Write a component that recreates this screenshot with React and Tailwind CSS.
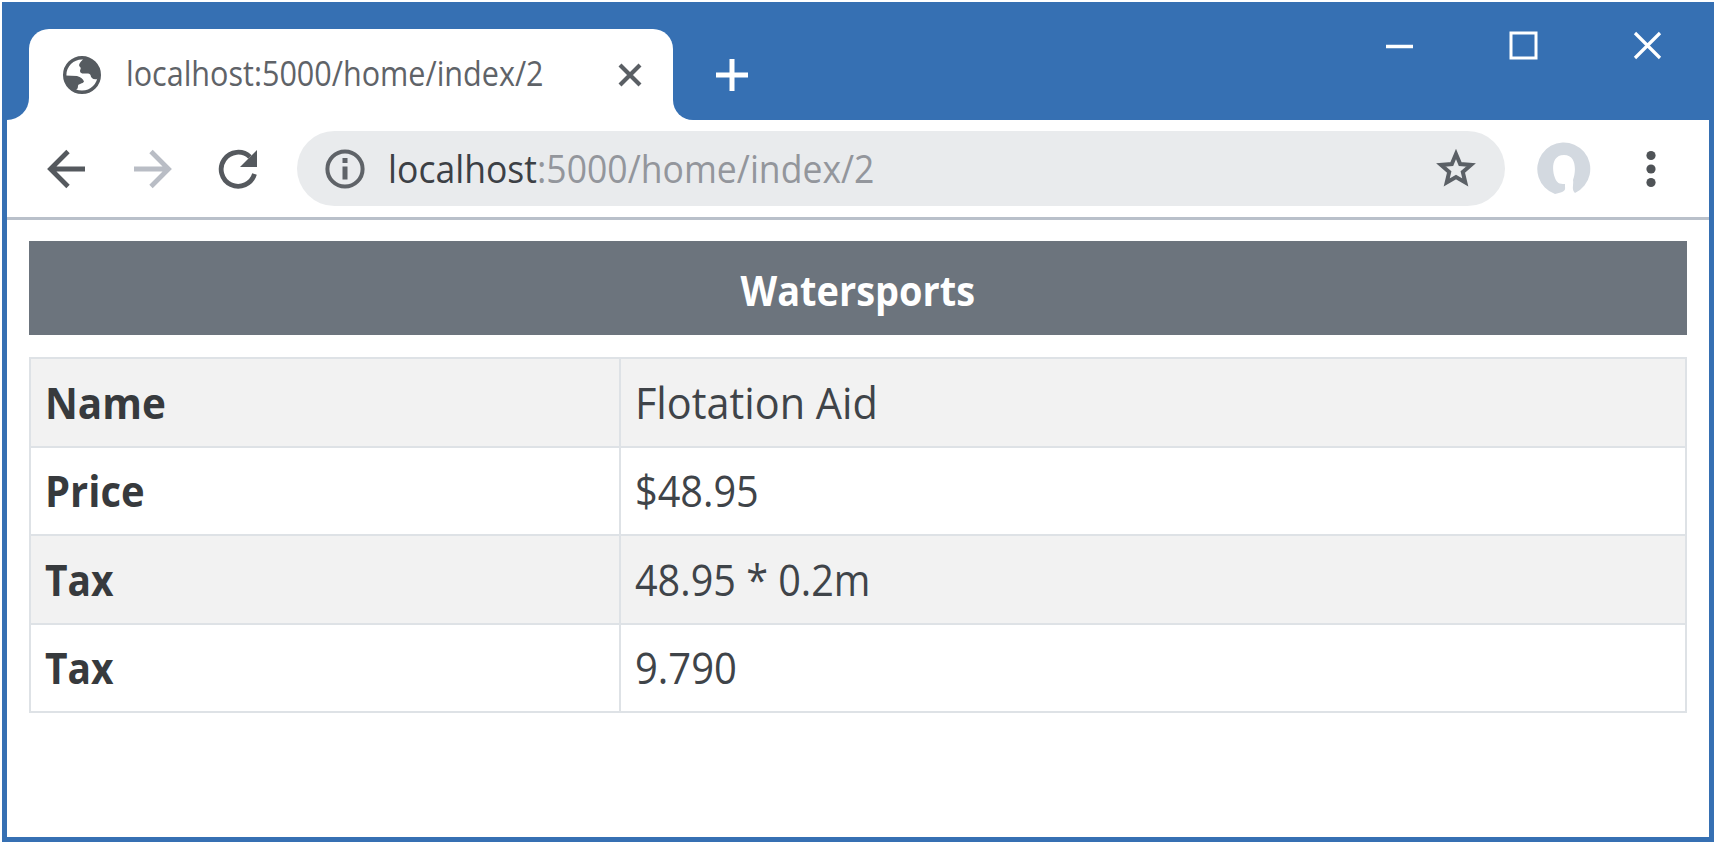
const rows = [
  { label: "Name", value: "Flotation Aid", labelFit: "scale-x-[0.94]", valueFit: "scale-x-[0.963]" },
  { label: "Price", value: "$48.95", labelFit: "scale-x-[0.93]", valueFit: "scale-x-[0.922]" },
  { label: "Tax", value: "48.95 * 0.2m", labelFit: "scale-x-[0.905]", valueFit: "scale-x-[0.92]" },
  { label: "Tax", value: "9.790", labelFit: "scale-x-[0.905]", valueFit: "scale-x-[0.93]" },
];

function Globe() {
  return (
    <svg className="h-10 w-10 shrink-0" viewBox="0 0 40 40" fill="none">
      <circle cx="20" cy="20" r="17.3" stroke="#565b60" strokeWidth="3.4" />
      <path d="M22 3 C19 7 15.500 9 18 12 C20 13.500 17 15 18.500 17.500 C21 20 27 17 28.500 20 C29 23 31 25 35.500 24 L38 18 C36 9 30 3 22 3 Z" fill="#565b60" />
      <path d="M3 20.500 L15 21 C19 22 21 24 22 26.500 C21 29 16 28.500 16 31 C16 34 14.500 35 12 35.500 C6 32 3 27 3 20.500 Z" fill="#565b60" />
    </svg>
  );
}

function TitleBar() {
  return (
    <header className="flex h-[113px] shrink-0 bg-[#3670b3]">
      <div className="flex w-[22px] items-end bg-white">
        <div className="h-full w-full rounded-br-[22px] bg-[#3670b3]" />
      </div>
      <div className="flex w-[644px] items-end">
        <div className="flex h-[91px] w-full items-center rounded-t-[20px] bg-white pl-[33px]">
          <Globe />
          <div className="ml-6 w-[452px] whitespace-nowrap pb-[3px] text-[34px] leading-none text-[#5f6368]">
            <span className="inline-block origin-left scale-x-[0.898]">localhost:5000/home/index/2</span>
          </div>
          <svg className="ml-10 h-6 w-6 shrink-0" viewBox="0 0 24 24" stroke="#5a5f64" strokeWidth="4.200">
            <path d="M2 2 L22 22 M22 2 L2 22" />
          </svg>
        </div>
      </div>
      <div className="w-6 bg-white">
        <div className="h-full w-full rounded-bl-[20px] bg-[#3670b3]" />
      </div>
      <svg className="ml-[18px] mt-[51px] h-[34px] w-[34px]" viewBox="0 0 34 34" stroke="white" strokeWidth="5">
        <path d="M17 1 V33 M1 17 H33" />
      </svg>
      <div className="ml-auto mr-[47px] mt-[24px] flex gap-[95px]">
        <svg className="h-[29px] w-[29px]" viewBox="0 0 29 29" stroke="white" strokeWidth="3.500"><path d="M1 15.500 H28" /></svg>
        <svg className="h-[29px] w-[29px]" viewBox="0 0 29 29" fill="none" stroke="white" strokeWidth="3"><rect x="2" y="2" width="25" height="25" /></svg>
        <svg className="h-[29px] w-[29px]" viewBox="0 0 29 29" stroke="white" strokeWidth="3.200"><path d="M2 2 L27 27 M27 2 L2 27" /></svg>
      </div>
    </header>
  );
}

function Toolbar() {
  return (
    <nav className="flex h-[100px] shrink-0 items-center border-b-[3px] border-[#b9c0ca] bg-white pl-10">
      <svg className="h-10 w-10 shrink-0" viewBox="0 0 40 40" fill="none" stroke="#55595e" strokeWidth="4.800">
        <path d="M38 20 H4 M21 2.500 L3.500 20 L21 37.500" />
      </svg>
      <svg className="ml-[46px] h-10 w-10 shrink-0" viewBox="0 0 40 40" fill="none" stroke="#b9bdc5" strokeWidth="4.800">
        <path d="M1 20 H35 M18 2.500 L35.500 20 L18 37.500" />
      </svg>
      <svg className="ml-[45px] h-10 w-10 shrink-0" viewBox="0 0 40 40" fill="none">
        <path d="M36.500 25 A17 17 0 1 1 32 8" stroke="#55595e" strokeWidth="4.800" />
        <path d="M39 1 V18 H22 Z" fill="#55595e" />
      </svg>
      <div className="ml-[39px] flex h-[75px] w-[1208px] shrink-0 items-center rounded-full bg-[#e9ebed] pl-7 pr-[27px]">
        <svg className="h-10 w-10 shrink-0" viewBox="0 0 40 40" fill="#5f6368">
          <circle cx="20" cy="20" r="17.600" fill="none" stroke="#5f6368" strokeWidth="4" />
          <rect x="17.500" y="17.500" width="5" height="13" /><rect x="17.500" y="9" width="5" height="5" />
        </svg>
        <div className="ml-[23px] whitespace-nowrap pb-[2px] text-[38px] leading-none text-[#93969c]">
          <span className="inline-block origin-left scale-x-[0.936]"><span className="text-[#3c4045]">localhost</span>:5000/home/index/2</span>
        </div>
        <svg className="ml-auto h-11 w-11 shrink-0" viewBox="0 0 44 44" fill="none" stroke="#5b6066" strokeWidth="4">
          <path d="M22 7 L26.200 17 L37 17.900 L28.800 25 L31.300 35.500 L22 30 L12.700 35.500 L15.200 25 L7 17.900 L17.800 17 Z" />
        </svg>
      </div>
      <svg className="ml-8 h-[54px] w-[54px] shrink-0" viewBox="0 0 54 54">
        <path d="M18 52 A26.500 26.500 0 1 1 38 51 C34 47 37 43 36 38 C39 30 40 13 27 13 C14 13 15 29 18 36 C20 41 22 42 28 42 V45 C29 50 24 50 18 52 Z" fill="#d3d9e0" />
      </svg>
      <svg className="ml-[55px] h-10 w-[10px] shrink-0" viewBox="0 0 10 40" fill="#4f5357">
        <circle cx="5" cy="6.500" r="4.600" /><circle cx="5" cy="20" r="4.600" /><circle cx="5" cy="33.500" r="4.600" />
      </svg>
    </nav>
  );
}

export default function App() {
  return (
    <div className="h-[844px] w-[1716px] bg-white p-[2px] font-['Open_Sans','Noto_Sans',sans-serif]">
      <div className="flex h-[840px] w-[1712px] flex-col border-[5px] border-[#3670b3] bg-white">
        <TitleBar />
        <Toolbar />
        <main className="px-[22px] pt-[21px]">
          <h1 className="flex h-[94px] items-center justify-center bg-[#6c747d] pt-[5px] text-[41px] font-bold text-white">
            <span className="inline-block scale-x-[0.925]">Watersports</span>
          </h1>
          <table className="mt-[22px] w-full table-fixed border-collapse whitespace-nowrap text-[43px] leading-none text-[#3f4449]">
            <colgroup>
              <col className="w-[590px]" />
              <col />
            </colgroup>
            <tbody>
              {rows.map((row, i) => (
                <tr key={i} className="h-[88.500px] odd:bg-[#f2f2f2]">
                  <th className="border-2 border-[#dee2e6] p-0 pl-[14px] pt-0 text-left font-bold text-[#373a3d]">
                    <span className={"inline-block origin-left " + row.labelFit}>{row.label}</span>
                  </th>
                  <td className="border-2 border-[#dee2e6] p-0 pl-[14px] pt-0">
                    <span className={"inline-block origin-left " + row.valueFit}>{row.value}</span>
                  </td>
                </tr>
              ))}
            </tbody>
          </table>
        </main>
      </div>
    </div>
  );
}
